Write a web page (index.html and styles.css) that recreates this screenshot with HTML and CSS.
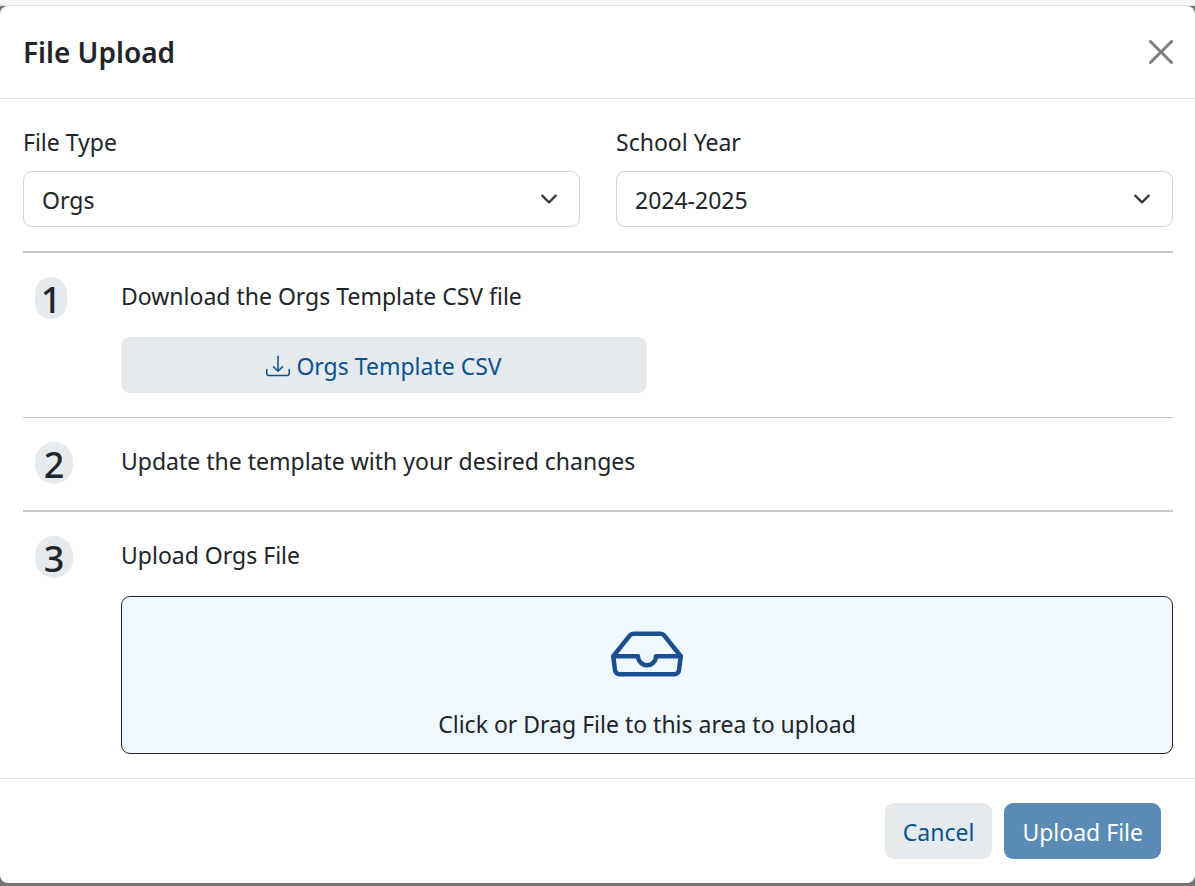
FILE: index.html
```
<!DOCTYPE html>
<html lang="en">
<head>
<meta charset="UTF-8">
<meta name="viewport" content="width=device-width, initial-scale=1.0">
<title>File Upload</title>
<link rel="stylesheet" href="styles.css">
</head>
<body>

<div class="page-strip"></div>
<div class="modal" role="dialog" aria-labelledby="modalTitle">
    <div class="modal-header">
        <h1 class="modal-title" id="modalTitle">File Upload</h1>
        <button type="button" class="btn-close" aria-label="Close">
            <svg width="24" height="24" viewBox="0 0 16 16" fill="currentColor"><path d="M.293.293a1 1 0 0 1 1.414 0L8 6.586 14.293.293a1 1 0 1 1 1.414 1.414L9.414 8l6.293 6.293a1 1 0 0 1-1.414 1.414L8 9.414l-6.293 6.293a1 1 0 0 1-1.414-1.414L6.586 8 .293 1.707a1 1 0 0 1 0-1.414z"/></svg>
        </button>
    </div>

    <form class="modal-body">
        <div class="fields">
            <div class="field">
                <label for="fileType">File Type</label>
                <select class="form-select" id="fileType">
                    <option selected>Orgs</option>
                </select>
            </div>
            <div class="field">
                <label for="schoolYear">School Year</label>
                <select class="form-select" id="schoolYear">
                    <option selected>2024-2025</option>
                </select>
            </div>
        </div>

        <div class="step">
            <div class="step-number"><span class="badge badge-narrow">1</span></div>
            <div class="step-content">
                <p>Download the Orgs Template CSV file</p>
                <button type="button" class="btn btn-light btn-template">
                    <svg width="24" height="24" viewBox="0 0 16 16" fill="currentColor"><path d="M.5 9.9a.5.5 0 0 1 .5.5v2.5a1 1 0 0 0 1 1h12a1 1 0 0 0 1-1v-2.5a.5.5 0 0 1 1 0v2.5a2 2 0 0 1-2 2H2a2 2 0 0 1-2-2v-2.5a.5.5 0 0 1 .5-.5"/><path d="M7.646 11.854a.5.5 0 0 0 .708 0l3-3a.5.5 0 0 0-.708-.708L8.5 10.293V1.5a.5.5 0 0 0-1 0v8.793L5.354 8.146a.5.5 0 1 0-.708.708z"/></svg>
                    Orgs Template CSV
                </button>
            </div>
        </div>

        <div class="step step-thin">
            <div class="step-number"><span class="badge">2</span></div>
            <div class="step-content">
                <p>Update the template with your desired changes</p>
            </div>
        </div>

        <div class="step">
            <div class="step-number"><span class="badge">3</span></div>
            <div class="step-content">
                <p>Upload Orgs File</p>
                <label class="dropzone" for="uploadInput">
                    <svg width="72" height="72" viewBox="0 0 16 16" fill="currentColor"><path d="M4.98 4a.5.5 0 0 0-.39.188L1.54 8H6a.5.5 0 0 1 .5.5 1.5 1.5 0 1 0 3 0A.5.5 0 0 1 10 8h4.46l-3.05-3.812A.5.5 0 0 0 11.02 4zm9.954 5H10.45a2.5 2.5 0 0 1-4.9 0H1.066l.32 2.562a.5.5 0 0 0 .497.438h12.234a.5.5 0 0 0 .496-.438zM3.809 3.563A1.5 1.5 0 0 1 4.981 3h6.038a1.5 1.5 0 0 1 1.172.563l3.7 4.625a.5.5 0 0 1 .105.374l-.39 3.124A1.5 1.5 0 0 1 14.117 13H1.883a1.5 1.5 0 0 1-1.489-1.314l-.39-3.124a.5.5 0 0 1 .106-.374z"/></svg>
                    <span>Click or Drag File to this area to upload</span>
                </label>
                <input type="file" id="uploadInput" accept=".csv" hidden>
            </div>
        </div>
    </form>

    <div class="modal-footer">
        <button type="button" class="btn btn-light">Cancel</button>
        <button type="button" class="btn btn-primary">Upload File</button>
    </div>
</div>

</body>
</html>
```
FILE: styles.css
```
* {
    box-sizing: border-box;
}

body {
    margin: 0;
    background-color: #747676;
    color: #212529;
    font-family: "Segoe UI", "Noto Sans", sans-serif;
    font-size: 23px;
    line-height: 36px;
}

/* Page that shows above the dialog */
.page-strip {
    height: 6px;
    background-color: #f6f6f6;
    border-bottom: 1px solid #e5e5e5;
}

.modal {
    background-color: #fff;
    border-radius: 8px;
}

.modal-header {
    display: flex;
    align-items: center;
    justify-content: space-between;
    padding: 24px 22px 24px 23px;
    border-bottom: 1px solid #dee2e6;
}

.modal-title {
    margin: 0;
    font-size: 28px;
    font-weight: 600;
    line-height: 44px;
}

.btn-close {
    display: flex;
    padding: 0;
    border: 0;
    background: none;
    color: #7f7f7f;
    cursor: pointer;
}

.modal-body {
    padding: 25px 22px 0 23px;
}

.fields {
    display: grid;
    grid-template-columns: 1fr 1fr;
    gap: 36px;
    margin-bottom: 24px;
}

.field {
    display: flex;
    flex-direction: column;
    gap: 11px;
}

.form-select {
    appearance: none;
    width: 100%;
    height: 56px;
    padding: 2px 54px 0 18px;
    border: 1px solid #ced4da;
    border-radius: 9px;
    background: #fff url("data:image/svg+xml,%3Csvg xmlns='http://www.w3.org/2000/svg' viewBox='0 0 16 16'%3E%3Cpath fill='none' stroke='%23343a40' stroke-linecap='round' stroke-linejoin='round' stroke-width='2' d='m2 5 6 6 6-6'/%3E%3C/svg%3E") no-repeat right 18px center / 24px 18px;
    color: inherit;
    font: inherit;
}

.step {
    display: flex;
    padding: 24px 0;
    border-top: 2px solid #c7c8c9;
}

.step-thin {
    border-top-width: 1px;
}

.step-number {
    flex: 0 0 98px;
    height: 44px;
    padding-left: 12px;
}

.badge {
    display: flex;
    align-items: center;
    justify-content: center;
    width: 38px;
    height: 42px;
    padding-top: 4px;
    border-radius: 20px;
    background-color: #e5eaee;
    font-size: 36px;
    font-weight: 500;
}

.badge-narrow {
    width: 32px;
}

.step-content {
    flex: 1;
}

.step-content p {
    margin: 0;
    padding-top: 1px;
    line-height: 36px;
}

.btn {
    display: flex;
    align-items: center;
    justify-content: center;
    gap: 6px;
    height: 56px;
    padding: 2px 18px 0;
    border: 0;
    border-radius: 9px;
    font: inherit;
    cursor: pointer;
}

.btn-light {
    background-color: #e5eaee;
    color: #0a528f;
}

.btn-primary {
    background-color: #5a8bb5;
    color: #fff;
}

.btn-template {
    width: 50%;
    margin-top: 23px;
}

.dropzone {
    display: flex;
    flex-direction: column;
    align-items: center;
    gap: 16px;
    margin-top: 23px;
    padding: 21px 24px 11px;
    border: 1px solid #212529;
    border-radius: 9px;
    background-color: #eff7ff;
    cursor: pointer;
}

.dropzone svg {
    color: #1b4f8f;
}

.modal-footer {
    display: flex;
    justify-content: flex-end;
    gap: 12px;
    padding: 24px 34px;
    border-top: 1px solid #dee2e6;
}
```
